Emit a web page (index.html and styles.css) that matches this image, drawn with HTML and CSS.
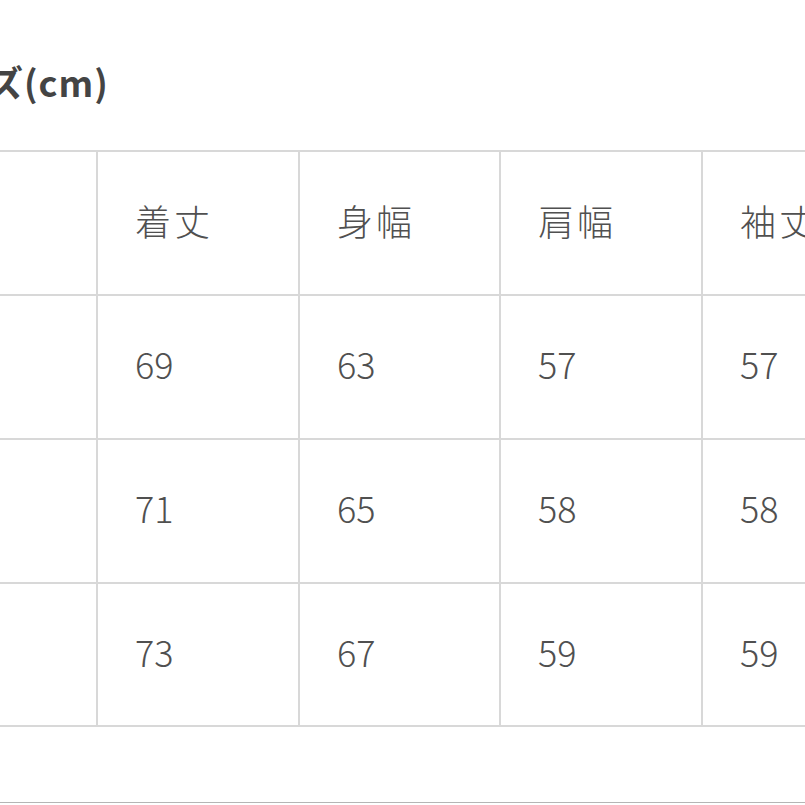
FILE: index.html
```html
<!DOCTYPE html>
<html lang="ja">
<head>
<meta charset="utf-8">
<link rel="stylesheet" href="styles.css">
</head>
<body>
<div class="page">
  <h2 class="title">サイズ(cm)</h2>
  <div class="grid">
    <div class="cell head"></div>
    <div class="cell head">着丈</div>
    <div class="cell head">身幅</div>
    <div class="cell head">肩幅</div>
    <div class="cell head">袖丈</div>
    <div class="cell">S</div>
    <div class="cell">69</div>
    <div class="cell">63</div>
    <div class="cell">57</div>
    <div class="cell">57</div>
    <div class="cell">M</div>
    <div class="cell">71</div>
    <div class="cell">65</div>
    <div class="cell">58</div>
    <div class="cell">58</div>
    <div class="cell">L</div>
    <div class="cell">73</div>
    <div class="cell">67</div>
    <div class="cell">59</div>
    <div class="cell">59</div>
  </div>
  <div class="rule"></div>
</div>
</body>
</html>
```
FILE: styles.css
```css
html, body {
  margin: 0;
  padding: 0;
  background: #ffffff;
}
.page {
  width: 805px;
  height: 805px;
  overflow: hidden;
  position: relative;
  font-family: "Noto Sans CJK JP", "Noto Sans", sans-serif;
}
.title {
  margin: 56px 0 44px -86px;
  height: 50px;
  line-height: 50px;
  font-size: 36px;
  font-weight: 700;
  color: #444444;
  white-space: nowrap;
  letter-spacing: 1px;
}
.grid {
  display: grid;
  grid-template-columns: 200px 200px 199px 200px 200px;
  grid-template-rows: 142px 142px 142px 141px;
  gap: 2px;
  padding: 2px;
  background: #d8d8d8;
  margin-left: -106px;
  width: max-content;
}
.cell {
  background: #ffffff;
  display: flex;
  align-items: center;
  padding-left: 37px;
  padding-bottom: 8px;
  box-sizing: border-box;
  font-size: 36px;
  font-weight: 300;
  color: #505050;
}
.head {
  padding-bottom: 6px;
  letter-spacing: 3px;
}
.rule {
  margin-top: 75px;
  width: 805px;
  border-top: 1px solid #b5b5b5;
}
```
